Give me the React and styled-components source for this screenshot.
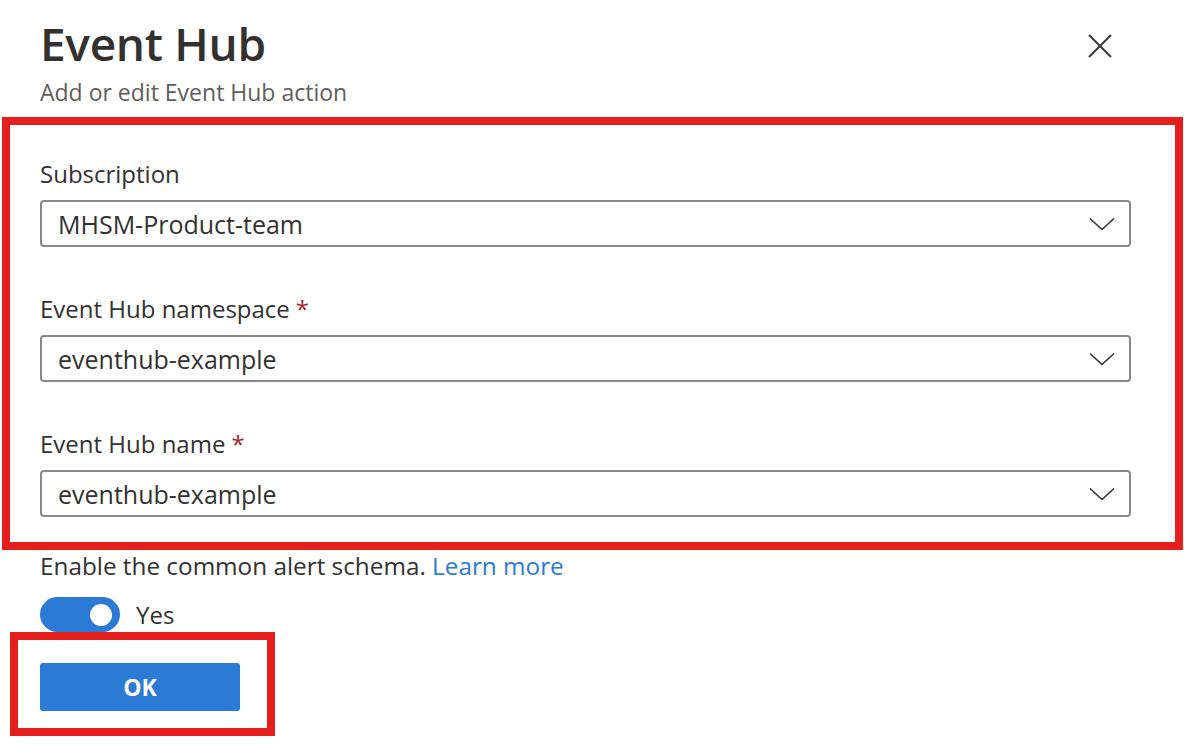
import styled, {createGlobalStyle} from "styled-components";

const GlobalStyle = createGlobalStyle`
  body {
    margin: 0;
    background: #ffffff;
    font-family: "Open Sans", "Noto Sans", sans-serif;
    color: #323130;
  }
`;

const Panel = styled.div`
  width: 1184px;
  height: 746px;
  overflow: hidden;
  background: #ffffff;
`;

const Header = styled.header`
  display: flex;
  align-items: flex-start;
  justify-content: space-between;
  padding: 15px 72px 0 40px;
`;

const Title = styled.h1`
  margin: 0;
  font-size: 46px;
  line-height: 56px;
  font-weight: 600;
  letter-spacing: -0.3px;
  color: #323130;
`;

const Subtitle = styled.p`
  margin: 5px 0 0;
  font-size: 23px;
  line-height: 32px;
  color: #605e5c;
`;

const CloseButton = styled.button`
  margin-top: 19px;
  padding: 0;
  border: 0;
  background: none;
  width: 24px;
  height: 24px;
  display: flex;
  cursor: pointer;

  svg {
    width: 24px;
    height: 24px;
  }
`;

const Highlight = styled.section`
  border: 8px solid #e41d1d;
  margin: ${(p) => p.$margin};
  padding: ${(p) => p.$padding};
  width: ${(p) => p.$width || "auto"};
  height: ${(p) => p.$height || "auto"};
  box-sizing: border-box;
`;

const Field = styled.div`
  display: flex;
  flex-direction: column;
  gap: 10px;

  & + & {
    margin-top: 46px;
  }
`;

const Label = styled.label`
  font-size: 24px;
  line-height: 32px;
  color: #323130;
`;

const Required = styled.span`
  color: #a4262c;
  margin-left: 6px;
`;

const Select = styled.div`
  height: 47px;
  box-sizing: border-box;
  border: 2px solid #8a8886;
  border-radius: 4px;
  display: flex;
  align-items: center;
  justify-content: space-between;
  padding: 0 14px 0 16px;
  font-size: 25px;
  color: #323130;

  svg {
    width: 26px;
    height: 14px;
  }
`;

const SchemaText = styled.p`
  margin: 0;
  padding-left: 40px;
  font-size: 24.3px;
  line-height: 32px;
  color: #323130;
`;

const Link = styled.a`
  color: #2b7bd4;
  text-decoration: none;
`;

const ToggleRow = styled.div`
  display: flex;
  align-items: center;
  gap: 16px;
  margin: 15px 0 0 40px;
  font-size: 24px;
  color: #323130;
`;

const Toggle = styled.span`
  width: 80px;
  height: 35px;
  border-radius: 18px;
  background: #2b7ad6;
  display: flex;
  align-items: center;
  justify-content: flex-end;
  padding-right: 8px;
  box-sizing: border-box;

  &::after {
    content: "";
    width: 22px;
    height: 22px;
    border-radius: 50%;
    background: #ffffff;
  }
`;

const OkButton = styled.button`
  width: 200px;
  height: 48px;
  border: 0;
  border-radius: 3px;
  background: #2b7ad6;
  color: #ffffff;
  font-family: "Open Sans", "Noto Sans", sans-serif;
  font-size: 23px;
  font-weight: 700;
  cursor: pointer;
`;

const Chevron = () => (
  <svg viewBox="0 0 26 14" fill="none">
    <path d="M1 1.5 L13 12.5 L25 1.5" stroke="#323130" strokeWidth="1.6" />
  </svg>
);

const fields = [
  {label: "Subscription", value: "MHSM-Product-team"},
  {label: "Event Hub namespace", value: "eventhub-example", required: true},
  {label: "Event Hub name", value: "eventhub-example", required: true},
];

function App() {
  return (
    <>
      <GlobalStyle />
      <Panel>
        <Header>
          <div>
            <Title>Event Hub</Title>
            <Subtitle>Add or edit Event Hub action</Subtitle>
          </div>
          <CloseButton aria-label="Close">
            <svg viewBox="0 0 24 24" fill="none">
              <path d="M1 1 L23 23 M23 1 L1 23" stroke="#3b3a39" strokeWidth="2" />
            </svg>
          </CloseButton>
        </Header>

        <Highlight $margin="9px 1px 0 2px" $padding="33px 44px 25px 30px">
          {fields.map((f) => (
            <Field key={f.label}>
              <Label>
                {f.label}
                {f.required && <Required>*</Required>}
              </Label>
              <Select>
                <span>{f.value}</span>
                <Chevron />
              </Select>
            </Field>
          ))}
        </Highlight>

        <SchemaText>
          Enable the common alert schema. <Link href="#">Learn more</Link>
        </SchemaText>

        <ToggleRow>
          <Toggle />
          <span>Yes</span>
        </ToggleRow>

        <Highlight $margin="0 0 0 10px" $padding="23px 0 0 22px" $width="265px" $height="104px">
          <OkButton>OK</OkButton>
        </Highlight>
      </Panel>
    </>
  );
}

export default App;
